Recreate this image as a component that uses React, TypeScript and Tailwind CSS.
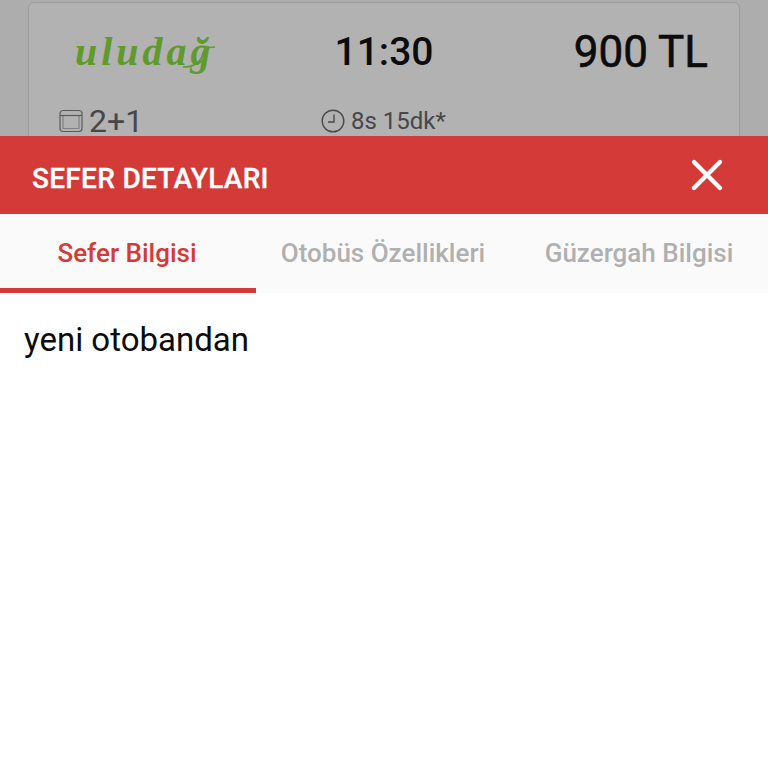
import React from "react";
import { X } from "lucide-react";

const tabs = ["Sefer Bilgisi", "Otobüs Özellikleri", "Güzergah Bilgisi"];

const SeatIcon = () => (
  <svg width="24" height="24" viewBox="0 0 24 24" fill="none" stroke="#5a5a5a" strokeWidth="1.2">
    <rect x="1" y="1.5" width="22" height="21" rx="3" />
    <path d="M1 6.500h22" />
    <path d="M4 6.500V19.500H20V6.500" strokeOpacity="0.55" />
  </svg>
);

const ClockIcon = () => (
  <svg width="24" height="24" viewBox="0 0 24 24" fill="none" stroke="#4a4a4a" strokeWidth="1.4">
    <circle cx="12" cy="12" r="10.8" />
    <path d="M13 5.5V13H7" />
  </svg>
);

export default function App() {
  return (
    <div className="w-[768px] h-[768px] overflow-hidden bg-white font-['Roboto',sans-serif]">
      {/* dimmed list behind the sheet */}
      <div className="h-[136px] bg-[#adadad] px-[28px] pt-[2px] overflow-hidden">
        <div className="h-[160px] rounded-[6px] border border-[#9c9c9c] bg-[#b2b2b2]">
          <div className="flex h-[100px] items-center">
            <div className="relative w-[240px] pl-[46px] pb-[3px]">
              <span className="font-['Liberation_Serif',serif] italic font-bold text-[40px] leading-none tracking-[4px] text-[#5f9a2c]">
                uludağ
              </span>
              {/* swash under the logo */}
              <svg className="absolute left-[150px] top-[10px]" width="40" height="26" viewBox="0 0 40 26" fill="none" stroke="#5f9a2c" strokeWidth="1.6">
                <path d="M4 25c10 0 18-4 20-14 1-4 6-6 12-6" />
              </svg>
            </div>
            <div className="w-[230px] text-center text-[39px] leading-none font-medium text-[#0c0c0c] pb-[2px]">
              11:30
            </div>
            <div className="flex-1 pr-[31px] text-right text-[44px] leading-none text-[#0c0c0c] pb-[2px] [-webkit-text-stroke:0.6px_#0c0c0c]">
              900 TL
            </div>
          </div>
          <div className="flex items-center pt-[4px] text-[#474747]">
            <div className="flex w-[292px] items-center gap-[6px] pl-[30px]">
              <SeatIcon />
              <span className="text-[32px] leading-[28px]">2+1</span>
            </div>
            <div className="flex items-center gap-[6px]">
              <ClockIcon />
              <span className="text-[24px] leading-[28px]">8s 15dk*</span>
            </div>
          </div>
        </div>
      </div>

      <div className="flex h-[78px] items-center justify-between bg-[#d43a37] pl-[32px] pr-[35px]">
        <span className="text-[28px] tracking-[0.3px] font-medium text-white pt-[8px] [-webkit-text-stroke:0.3px_#ffffff]">SEFER DETAYLARI</span>
        <X size={52} strokeWidth={2} className="text-white mb-[1px]" />
      </div>

      <div className="flex h-[79px] bg-[#fafafa]">
        {tabs.map((tab, i) => (
          <div
            key={tab}
            className={
              i === 0
                ? "flex w-[256px] items-center justify-center border-b-[5px] border-[#d43a37] pt-[4px] pr-[2px] text-[26px] font-medium text-[#d43a37]"
                : "flex w-[256px] items-center justify-center border-b-[5px] border-transparent pt-[4px] pr-[2px] text-[26px] font-medium text-[#b0b0b0]"
            }
          >
            {tab}
          </div>
        ))}
      </div>

      <div className="px-[24px] pt-[26px] text-[33px] leading-[42px] text-[#0c0c0c]">yeni otobandan</div>
    </div>
  );
}
